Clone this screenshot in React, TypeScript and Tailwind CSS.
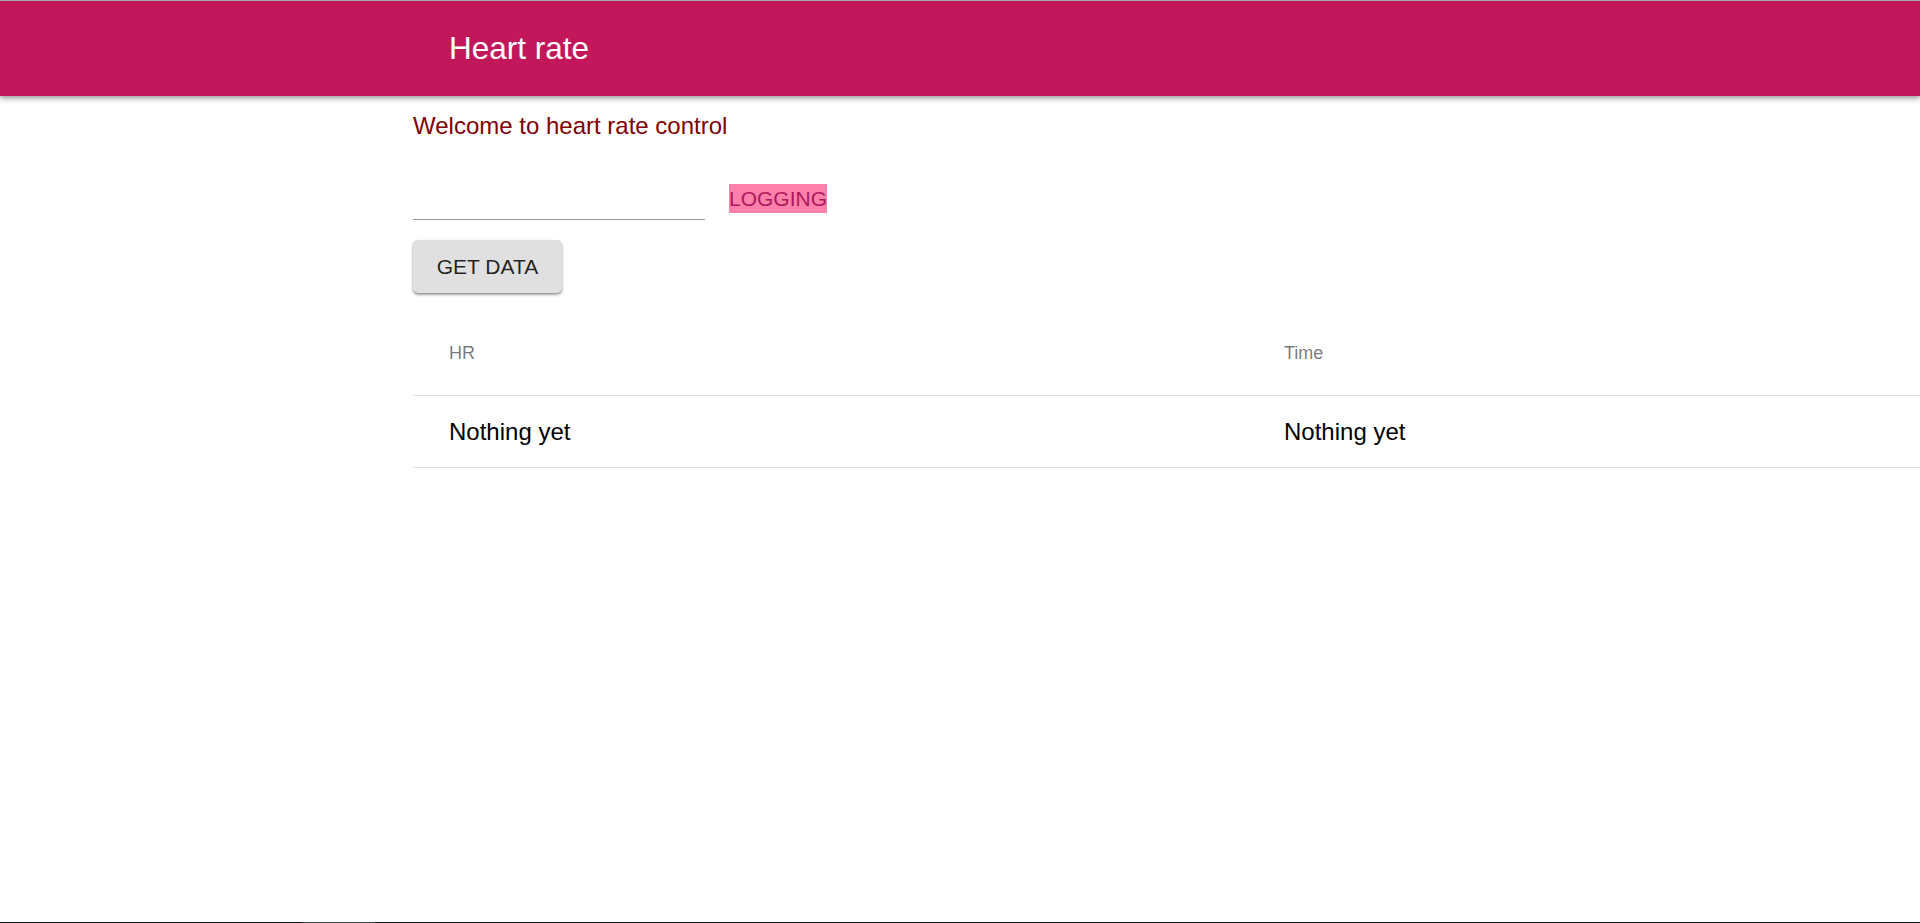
import React from 'react';

const font = "font-['Liberation_Sans',Arial,sans-serif]";

const rows = [{ hr: 'Nothing yet', time: 'Nothing yet' }];

function Header() {
  return (
    <header className="border-t border-[#a8a8a8] bg-[#c2185b] shadow-[0_3px_6px_rgba(0,0,0,0.25),0_2px_3px_rgba(0,0,0,0.15)]">
      <div className="flex h-[95px] items-center pl-[449px]">
        <h1 className="text-[31.5px] leading-none text-white">Heart rate</h1>
      </div>
    </header>
  );
}

function Controls() {
  return (
    <div className="pl-[413px]">
      <p className="mt-[16px] text-[24px] leading-[28px] text-[#800000]">Welcome to heart rate control</p>
      <div className="mt-[43px] flex items-end">
        <div className="w-[292px] border-b border-[#949494]">
          <input className="h-[36px] w-full bg-transparent text-[24px] outline-none" />
        </div>
        <span className="mb-[7px] ml-[24px] bg-[#ff80ab] text-[21px] leading-[29px] text-[#b0175a]">
          LOGGING
        </span>
      </div>
      <button className="mt-[20px] h-[53px] w-[149px] rounded-[5px] bg-[#e0e0e0] text-[21px] text-[rgba(0,0,0,0.87)] shadow-[0_2px_3px_rgba(0,0,0,0.3),0_1px_2px_rgba(0,0,0,0.2)]">
        GET DATA
      </button>
    </div>
  );
}

function DataTable() {
  return (
    <div className="mt-[19px] pl-[413px]">
      <div className="grid h-[84px] grid-cols-[835px_1fr] items-center border-b-[1.5px] border-[#e0e0e0] text-[18px] text-[rgba(0,0,0,0.54)]">
        <div className="pl-[36px]">HR</div>
        <div className="pl-[36px]">Time</div>
      </div>
      {rows.map((r, i) => (
        <div
          key={i}
          className="grid h-[72px] grid-cols-[835px_1fr] items-center border-b-[1.5px] border-[#e0e0e0] text-[24px] text-black"
        >
          <div className="pl-[36px]">{r.hr}</div>
          <div className="pl-[36px]">{r.time}</div>
        </div>
      ))}
    </div>
  );
}

export default function App() {
  return (
    <div className={`${font} flex min-h-[923px] flex-col bg-white`}>
      <Header />
      <div className="flex-1">
        <Controls />
        <DataTable />
      </div>
      <div className="flex h-px">
        <div className="w-[302px] bg-[#10181a]" />
        <div className="w-[73px] bg-[#3a4042]" />
        <div className="flex-1 bg-[#10181a]" />
      </div>
    </div>
  );
}
